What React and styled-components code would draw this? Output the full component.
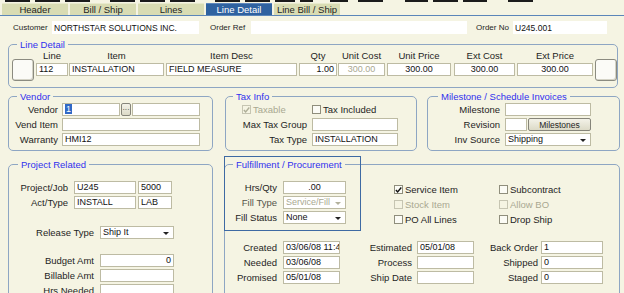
import React from 'react';
import styled, { createGlobalStyle } from 'styled-components';

const GlobalStyle = createGlobalStyle`
  html, body {
    margin: 0;
    padding: 0;
    background: #f5f4e3;
  }
  body {
    font-family: "Liberation Sans", Arial, sans-serif;
  }
`;

const Page = styled.div`
  width: 624px;
  height: 293px;
  overflow: hidden;
  background: #f5f4e3;
  color: #1e1e1e;
  font-size: 9.5px;
  display: flex;
  flex-direction: column;
`;

const TopStrip = styled.div`
  height: 2px;
  display: flex;
  flex: none;
`;

const Seg = styled.div`
  width: ${p => p.$w}px;
  background: ${p => (p.$dark ? '#1b1b1b' : 'transparent')};
`;

const TabBar = styled.div`
  display: flex;
  gap: 2px;
  height: 13px;
  padding-left: 2px;
  align-items: flex-end;
  border-bottom: 1px solid #5b86b9;
  flex: none;
`;

const Tab = styled.div`
  box-sizing: border-box;
  width: 66px;
  height: 12px;
  display: flex;
  align-items: center;
  justify-content: center;
  font-size: 9.5px;
  background: ${p => (p.$active ? '#2f62a0' : '#d9dcb3')};
  color: ${p => (p.$active ? '#ffffff' : '#1e1e1e')};
  border-top: 1px solid ${p => (p.$active ? '#5d87bd' : '#e8eacd')};
`;

const HeaderRow = styled.div`
  display: flex;
  align-items: center;
  height: 14px;
  margin-top: 4px;
  padding-left: 13px;
  flex: none;
`;

const HeadLabel = styled.div`
  width: ${p => p.$w}px;
  margin-left: ${p => p.$ml || 0}px;
  font-size: 8px;
  flex: none;
`;

const Field = styled.div`
  box-sizing: border-box;
  position: relative;
  flex: none;
  width: ${p => p.$w}px;
  height: ${p => p.$h || 13}px;
  margin-left: ${p => p.$ml || 0}px;
  background: #ffffff;
  border: ${p => (p.$plain ? 'none' : '1px solid #bdbba3')};
  padding: ${p => (p.$select ? '0 10px 0 2px' : '0 2px')};
  font-size: ${p => (p.$plain ? 8.5 : 9)}px;
  line-height: ${p => (p.$plain ? 14 : 11)}px;
  white-space: nowrap;
  overflow: hidden;
  text-align: ${p => p.$align || 'left'};
  color: ${p => (p.$disabled ? '#a9a891' : '#111111')};

  &::after {
    content: '';
    display: ${p => (p.$select ? 'block' : 'none')};
    position: absolute;
    right: 4px;
    top: 5px;
    border-left: 3px solid transparent;
    border-right: 3px solid transparent;
    border-top: 3px solid ${p => (p.$disabled ? '#b3b29c' : '#222222')};
  }
`;

const Highlight = styled.span`
  background: #3169c6;
  color: #ffffff;
  padding: 0 1px;
`;

const Group = styled.fieldset`
  box-sizing: border-box;
  position: relative;
  margin: 0 0 0 ${p => p.$ml || 0}px;
  padding: ${p => p.$pad || '0'};
  width: ${p => p.$w}px;
  height: ${p => (p.$h ? `${p.$h}px` : 'auto')};
  min-width: 0;
  border: 1px solid #8ea6c3;
  border-radius: 5px;
  flex: none;
`;

const Legend = styled.legend`
  color: #3030ee;
  font-size: 9.5px;
  line-height: 11px;
  padding: 0 3px;
  margin-left: ${p => p.$ml}px;
`;

const SquareButton = styled.div`
  box-sizing: border-box;
  width: 22px;
  height: 22px;
  margin-top: 9px;
  margin-left: ${p => p.$ml || 0}px;
  background: #fbfbf7;
  border: 1px solid #8b8b80;
  border-radius: 3px;
  box-shadow: inset -1px -1px 0 #d4d3c6;
  flex: none;
`;

const LineRow = styled.div`
  display: flex;
  align-items: flex-start;
  padding: 0 0 6px 3px;
`;

const Col = styled.div`
  display: flex;
  flex-direction: column;
  width: ${p => p.$w}px;
  margin-left: ${p => p.$ml || 0}px;
  flex: none;
`;

const ColHead = styled.div`
  height: 11px;
  line-height: 11px;
  text-align: center;
  margin-bottom: 2px;
  white-space: nowrap;
`;

const GroupRow = styled.div`
  display: flex;
  margin-top: ${p => p.$mt}px;
  flex: none;
`;

const Body = styled.div`
  padding: ${p => p.$pad || '0'};
`;

const FormRow = styled.div`
  display: flex;
  align-items: center;
  height: 13px;
  margin-top: ${p => (p.$mt === undefined ? 2 : p.$mt)}px;
  padding-left: ${p => p.$pl || 0}px;
`;

const Label = styled.div`
  width: ${p => p.$w}px;
  margin-right: ${p => p.$mr || 5}px;
  text-align: right;
  white-space: nowrap;
  flex: none;
`;

const Button = styled.div`
  box-sizing: border-box;
  width: ${p => p.$w}px;
  height: 13px;
  margin-left: 1px;
  display: flex;
  align-items: center;
  justify-content: center;
  background: linear-gradient(#f3f2e8, #dcdac7);
  border: 1px solid #86857a;
  border-radius: 2px;
  font-size: ${p => p.$fs || 8.5}px;
  color: #1e1e1e;
  flex: none;
`;

const CheckItem = styled.div`
  display: flex;
  align-items: center;
  width: ${p => (p.$w ? `${p.$w}px` : 'auto')};
  color: ${p => (p.$disabled ? '#a9a891' : '#1e1e1e')};
  white-space: nowrap;
`;

const Box = styled.span`
  box-sizing: border-box;
  width: 9px;
  height: 9px;
  margin-right: 2px;
  display: inline-flex;
  align-items: center;
  justify-content: center;
  border: 1px solid ${p => (p.$disabled ? '#c6c5b2' : '#8f8e7c')};
  background: ${p => (p.$disabled ? '#f5f4e3' : '#fbfbf5')};
  flex: none;
`;

const TopSection = styled.div`
  position: relative;
  display: flex;
  padding-top: 11px;
`;

const FocusFrame = styled.div`
  position: absolute;
  left: -1px;
  top: -14px;
  width: 137px;
  height: 75px;
  box-sizing: border-box;
  border: 1px solid #3e6aa3;
  pointer-events: none;
`;

const CheckGrid = styled.div`
  display: grid;
  grid-template-columns: 105px auto;
  grid-auto-rows: 15px;
  align-items: center;
  margin-left: 48px;
  margin-top: 1px;
`;

const Check = ({ checked, disabled, label, w }) => (
  <CheckItem $disabled={disabled} $w={w}>
    <Box $disabled={disabled}>
      {checked && (
        <svg width="8" height="8" viewBox="0 0 8 8">
          <path
            d="M1 4 L3 6.2 L7.2 1.2"
            fill="none"
            stroke={disabled ? '#aeae98' : '#111'}
            strokeWidth="1.6"
          />
        </svg>
      )}
    </Box>
    {label}
  </CheckItem>
);

const strip = [
  [5, 0], [25, 1], [5, 0], [25, 1], [5, 0], [25, 1], [20, 0], [25, 1], [5, 0], [25, 1],
  [5, 0], [25, 1], [20, 0], [25, 1], [5, 0], [25, 1], [5, 0], [20, 1], [5, 0], [13, 1],
  [17, 0], [18, 1], [10, 0], [25, 1], [22, 0], [23, 1], [5, 0], [25, 1], [5, 0], [24, 1],
  [21, 0], [25, 1],
];

const tabs = ['Header', 'Bill / Ship', 'Lines', 'Line Detail', 'Line Bill / Ship'];

const lineCols = [
  { head: 'Line', w: 32, ml: 2, value: '112' },
  { head: 'Item', w: 95, ml: 1, value: 'INSTALLATION' },
  { head: 'Item Desc', w: 131, ml: 2, value: 'FIELD MEASURE' },
  { head: 'Qty', w: 38, ml: 2, value: '1.00', align: 'right' },
  { head: 'Unit Cost', w: 47, ml: 1, value: '300.00', align: 'center', disabled: true },
  { head: 'Unit Price', w: 64, ml: 2, value: '300.00', align: 'center' },
  { head: 'Ext Cost', w: 61, ml: 3, value: '300.00', align: 'center' },
  { head: 'Ext Price', w: 76, ml: 2, value: '300.00', align: 'center' },
];

const dateRows = [
  ['Created', '03/06/08 11:46', 'Estimated', '05/01/08', 'Back Order', '1'],
  ['Needed', '03/06/08', 'Process', '', 'Shipped', '0'],
  ['Promised', '05/01/08', 'Ship Date', '', 'Staged', '0'],
];

export default function App() {
  return (
    <Page>
      <GlobalStyle />
      <TopStrip>
        {strip.map(([w, d], i) => (
          <Seg key={i} $w={w} $dark={d} />
        ))}
      </TopStrip>

      <TabBar>
        {tabs.map(t => (
          <Tab key={t} $active={t === 'Line Detail'}>{t}</Tab>
        ))}
      </TabBar>

      <HeaderRow>
        <HeadLabel $w={39}>Customer</HeadLabel>
        <Field $plain $w={147}>NORTHSTAR SOLUTIONS INC.</Field>
        <HeadLabel $w={41} $ml={11}>Order Ref</HeadLabel>
        <Field $plain $w={216} />
        <HeadLabel $w={37} $ml={9}>Order No</HeadLabel>
        <Field $plain $w={94}>U245.001</Field>
      </HeaderRow>

      <GroupRow $mt={5}>
        <Group $ml={8} $w={610}>
          <Legend $ml={8}>Line Detail</Legend>
          <LineRow>
            <SquareButton />
            {lineCols.map(c => (
              <Col key={c.head} $w={c.w} $ml={c.ml}>
                <ColHead>{c.head}</ColHead>
                <Field $w={c.w} $align={c.align} $disabled={c.disabled}>{c.value}</Field>
              </Col>
            ))}
            <SquareButton $ml={2} />
          </LineRow>
        </Group>
      </GroupRow>

      <GroupRow $mt={3}>
        <Group $ml={8} $w={205}>
          <Legend $ml={8}>Vendor</Legend>
          <Body $pad="0 0 4px 0">
            <FormRow $mt={1}>
              <Label $w={49} $mr={4}>Vendor</Label>
              <Field $w={58}><Highlight>1</Highlight></Field>
              <Button $w={10} $fs={7}>···</Button>
              <Field $w={68} $ml={1} />
            </FormRow>
            <FormRow>
              <Label $w={49} $mr={4}>Vend Item</Label>
              <Field $w={138} />
            </FormRow>
            <FormRow>
              <Label $w={49} $mr={4}>Warranty</Label>
              <Field $w={138}>HMI12</Field>
            </FormRow>
          </Body>
        </Group>

        <Group $ml={12} $w={192}>
          <Legend $ml={7}>Tax Info</Legend>
          <Body $pad="0 0 4px 0">
            <FormRow $mt={1} $pl={16}>
              <Check checked disabled label="Taxable" w={70} />
              <Check label="Tax Included" />
            </FormRow>
            <FormRow>
              <Label $w={81}>Max Tax Group</Label>
              <Field $w={86} />
            </FormRow>
            <FormRow>
              <Label $w={81}>Tax Type</Label>
              <Field $w={86}>INSTALLATION</Field>
            </FormRow>
          </Body>
        </Group>

        <Group $ml={10} $w={193}>
          <Legend $ml={10}>Milestone / Schedule Invoices</Legend>
          <Body $pad="0 0 4px 0">
            <FormRow $mt={1}>
              <Label $w={72}>Milestone</Label>
              <Field $w={86} />
            </FormRow>
            <FormRow>
              <Label $w={72}>Revision</Label>
              <Field $w={22} />
              <Button $w={63}>Milestones</Button>
            </FormRow>
            <FormRow>
              <Label $w={72}>Inv Source</Label>
              <Field $w={86} $select>Shipping</Field>
            </FormRow>
          </Body>
        </Group>
      </GroupRow>

      <GroupRow $mt={8}>
        <Group $ml={8} $w={205} $h={160}>
          <Legend $ml={9}>Project Related</Legend>
          <Body $pad="9px 0 0 0">
            <FormRow>
              <Label $w={59} $mr={6}>Project/Job</Label>
              <Field $w={62}>U245</Field>
              <Field $w={34} $ml={2}>5000</Field>
            </FormRow>
            <FormRow>
              <Label $w={59} $mr={6}>Act/Type</Label>
              <Field $w={62}>INSTALL</Field>
              <Field $w={34} $ml={2}>LAB</Field>
            </FormRow>
            <FormRow $mt={17}>
              <Label $w={85} $mr={6}>Release Type</Label>
              <Field $w={74} $select>Ship It</Field>
            </FormRow>
            <FormRow $mt={15}>
              <Label $w={85} $mr={6}>Budget Amt</Label>
              <Field $w={74} $align="right">0</Field>
            </FormRow>
            <FormRow>
              <Label $w={85} $mr={6}>Billable Amt</Label>
              <Field $w={74} />
            </FormRow>
            <FormRow>
              <Label $w={85} $mr={6}>Hrs Needed</Label>
              <Field $w={74} />
            </FormRow>
          </Body>
        </Group>

        <Group $ml={11} $w={396} $h={160}>
          <Legend $ml={8}>Fulfillment / Procurement</Legend>
          <TopSection>
            <FocusFrame />
            <div>
              <FormRow $mt={0}>
                <Label $w={52} $mr={6}>Hrs/Qty</Label>
                <Field $w={63} $align="center">.00</Field>
              </FormRow>
              <FormRow>
                <Label $w={52} $mr={6} style={{ color: '#55554a' }}>Fill Type</Label>
                <Field $w={63} $select $disabled>Service/Fill</Field>
              </FormRow>
              <FormRow>
                <Label $w={52} $mr={6}>Fill Status</Label>
                <Field $w={63} $select>None</Field>
              </FormRow>
            </div>
            <CheckGrid>
              <Check checked label="Service Item" />
              <Check label="Subcontract" />
              <Check disabled label="Stock Item" />
              <Check disabled label="Allow BO" />
              <Check label="PO All Lines" />
              <Check label="Drop Ship" />
            </CheckGrid>
          </TopSection>
          <Body $pad="14px 0 0 0">
            {dateRows.map((r, i) => (
              <FormRow key={r[0]} $mt={i === 0 ? 0 : 2}>
                <Label $w={52} $mr={6}>{r[0]}</Label>
                <Field $w={57}>{r[1]}</Field>
                <Label $w={72} $mr={5}>{r[2]}</Label>
                <Field $w={57}>{r[3]}</Field>
                <Label $w={64} $mr={3}>{r[4]}</Label>
                <Field $w={62}>{r[5]}</Field>
              </FormRow>
            ))}
          </Body>
        </Group>
      </GroupRow>
    </Page>
  );
}
